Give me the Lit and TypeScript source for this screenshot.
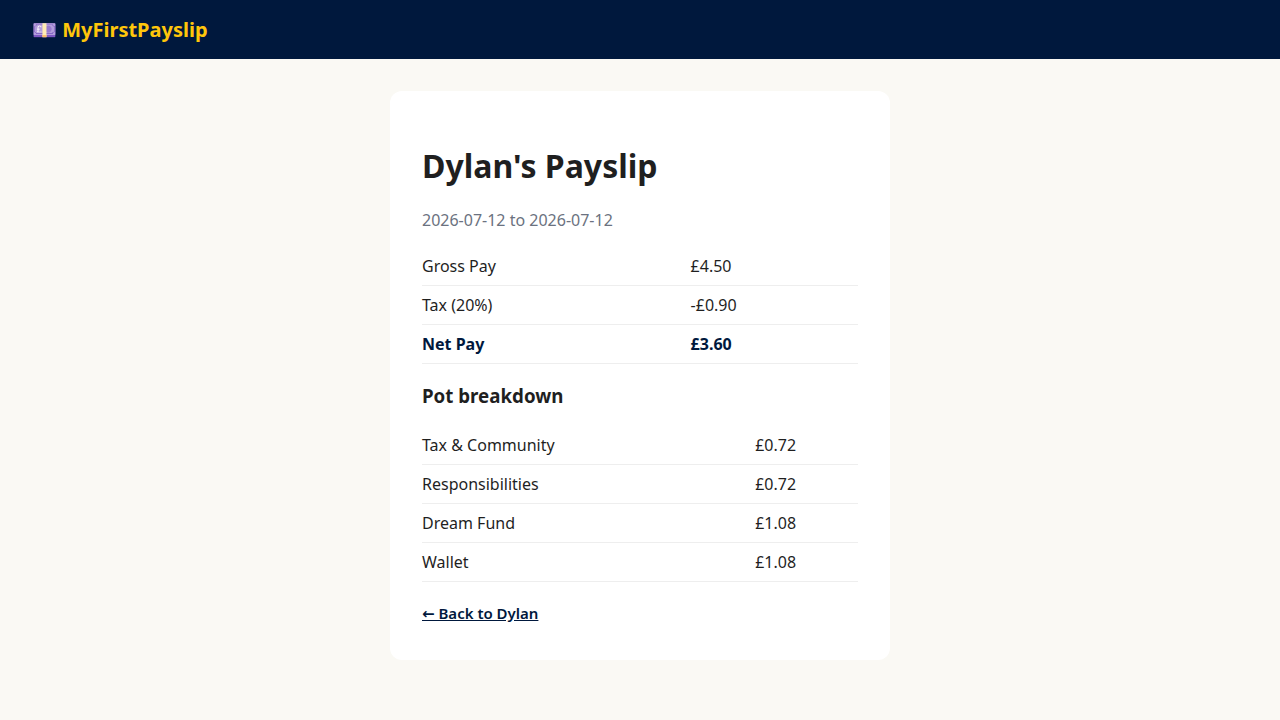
import { LitElement, html, css } from "lit";
import { customElement } from "lit/decorators.js";

const pay = [
  { label: "Gross Pay", amount: "£4.50" },
  { label: "Tax (20%)", amount: "-£0.90" },
  { label: "Net Pay", amount: "£3.60", strong: true },
];

const pots = [
  { label: "Tax & Community", amount: "£0.72" },
  { label: "Responsibilities", amount: "£0.72" },
  { label: "Dream Fund", amount: "£1.08" },
  { label: "Wallet", amount: "£1.08" },
];

@customElement("app-root")
export class AppRoot extends LitElement {
  static styles = css`
    :host {
      display: block;
      min-height: 100vh;
      background: #faf9f4;
      color: #1f1f1f;
      font-family: "Noto Sans", "DejaVu Sans", sans-serif;
      font-size: 16px;
    }
    .bar {
      background: #00183d;
      padding: 16px 32px;
    }
    .brand {
      color: #ffc60b;
      font-size: 20px;
      font-weight: 700;
      text-decoration: none;
    }
    .card {
      box-sizing: border-box;
      max-width: 500px;
      margin: 32px auto;
      padding: 32px;
      background: #fff;
      border-radius: 12px;
    }
    .period {
      color: #6b7280;
    }
    table {
      width: 100%;
      border-collapse: collapse;
    }
    td {
      padding: 8px 0;
      border-bottom: 1px solid #eee;
    }
    .net {
      font-weight: 700;
      color: #00183d;
    }
    .back {
      display: block;
      width: fit-content;
      margin-top: 16px;
      padding: 4px 0;
      color: #00183d;
      font-size: 15px;
      line-height: 22px;
      font-weight: 600;
    }
  `;

  render() {
    return html`
      <header class="bar"><a class="brand" href="#">💷 MyFirstPayslip</a></header>
      <main class="card">
        <h1>Dylan's Payslip</h1>
        <p class="period">2026-07-12 to 2026-07-12</p>
        <table>
          ${pay.map((r) => html`<tr class=${r.strong ? "net" : ""}><td>${r.label}</td><td>${r.amount}</td></tr>`)}
        </table>
        <h3>Pot breakdown</h3>
        <table>
          ${pots.map((r) => html`<tr><td>${r.label}</td><td>${r.amount}</td></tr>`)}
        </table>
        <a class="back" href="#">← Back to Dylan</a>
      </main>
    `;
  }
}
